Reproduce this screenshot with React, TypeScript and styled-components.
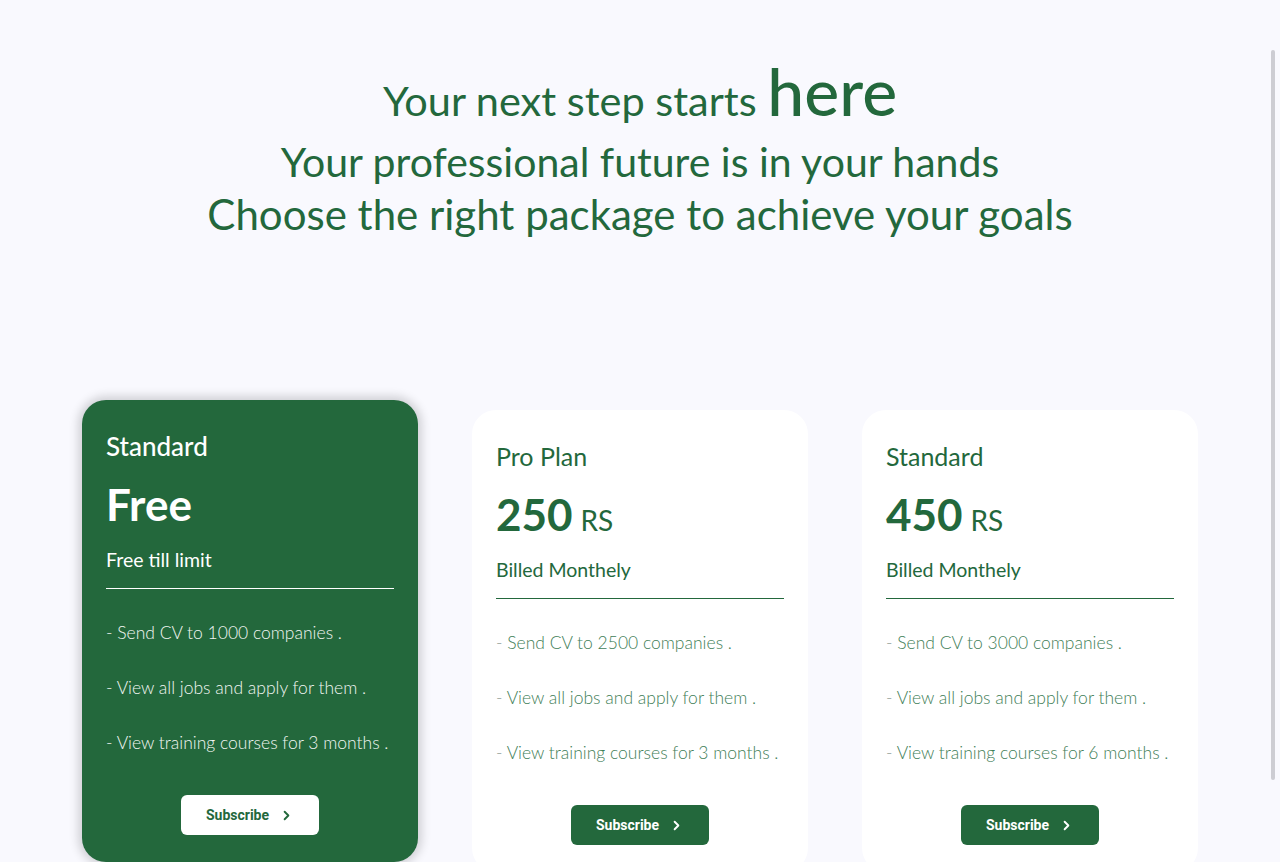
import React from "react";
import styled, { createGlobalStyle } from "styled-components";
import { ChevronRight } from "lucide-react";

const GREEN = "#23683c";

const GlobalStyle = createGlobalStyle`
  html, body {
    margin: 0;
    padding: 0;
    background: #f9f9fe;
    overflow: hidden;
  }
  body {
    font-family: "Lato", "Open Sans", sans-serif;
  }
`;

const Page = styled.main`
  min-height: 862px;
  padding-top: 58px;
  box-sizing: border-box;
`;

const Hero = styled.header`
  display: flex;
  flex-direction: column;
  align-items: center;
  color: ${GREEN};
  text-align: center;
`;

const HeroLine = styled.h1<{ $size: number; $height: number }>`
  margin: 0;
  font-weight: 400;
  font-size: ${({ $size }) => $size}px;
  line-height: ${({ $height }) => $height}px;
`;

const Big = styled.span`
  font-size: 66px;
  font-weight: 500;
  line-height: 1;
`;

const Plans = styled.section`
  display: flex;
  justify-content: center;
  align-items: flex-start;
  gap: 54px;
  margin-top: 170px;
`;

const Card = styled.article<{ $active?: boolean }>`
  width: 336px;
  height: 462px;
  box-sizing: border-box;
  padding: 30px 24px 27px;
  border-radius: 24px;
  display: flex;
  flex-direction: column;
  background: ${({ $active }) => ($active ? GREEN : "#ffffff")};
  color: ${({ $active }) => ($active ? "#ffffff" : GREEN)};
  transform: ${({ $active }) => ($active ? "translateY(-10px)" : "none")};
  box-shadow: ${({ $active }) =>
    $active ? "0 0 10px 4px rgba(0, 0, 0, 0.16)" : "none"};
`;

const PlanName = styled.h2<{ $active?: boolean }>`
  margin: 0;
  font-size: ${({ $active }) => ($active ? 26 : 25)}px;
  line-height: 32px;
  font-weight: ${({ $active }) => ($active ? 500 : 400)};
`;

const Price = styled.div`
  margin-top: 18px;
  height: 48px;
  font-size: 44px;
  line-height: 48px;
  font-weight: 700;
`;

const Currency = styled.span`
  font-size: 28px;
  line-height: 1;
  font-weight: 400;
  margin-left: 8px;
`;

const Billing = styled.p`
  margin: 18px 0 0;
  font-size: 19.5px;
  line-height: 28px;
  font-weight: 400;
`;

const Divider = styled.hr<{ $light?: boolean }>`
  margin: 14px 0 0;
  border: none;
  height: 1px;
  background: ${({ $light }) => ($light ? "#ffffff" : GREEN)};
`;

const Features = styled.ul`
  list-style: none;
  margin: 32px 0 0;
  padding: 0;
  display: flex;
  flex-direction: column;
  gap: 31px;
`;

const Feature = styled.li<{ $light?: boolean }>`
  font-size: 17.5px;
  line-height: 24px;
  font-weight: 300;
  white-space: nowrap;
  color: ${({ $light }) => ($light ? "#f1f6f2" : "#3f8058")};
`;

const Dash = styled.span<{ $light?: boolean }>`
  color: ${({ $light }) => ($light ? "#f1f6f2" : "#8f9c94")};
`;

const Subscribe = styled.button<{ $light?: boolean }>`
  align-self: center;
  margin-top: auto;
  width: 138px;
  height: 40px;
  border: none;
  border-radius: 6px;
  display: flex;
  align-items: center;
  justify-content: center;
  gap: 10px;
  font-family: "Roboto", sans-serif;
  font-weight: 700;
  font-size: 14px;
  cursor: pointer;
  background: ${({ $light }) => ($light ? "#ffffff" : GREEN)};
  color: ${({ $light }) => ($light ? GREEN : "#ffffff")};
`;

const ScrollThumb = styled.div`
  position: fixed;
  right: 5px;
  top: 50px;
  width: 4px;
  height: 730px;
  border-radius: 2px;
  background: #cdcdd3;
`;

type Plan = {
  name: string;
  price: string;
  currency?: string;
  billing: string;
  features: string[];
  active?: boolean;
};

const plans: Plan[] = [
  {
    name: "Standard",
    price: "Free",
    billing: "Free till limit",
    features: [
      "Send CV to 1000 companies .",
      "View all jobs and apply for them .",
      "View training courses for 3 months .",
    ],
    active: true,
  },
  {
    name: "Pro Plan",
    price: "250",
    currency: "RS",
    billing: "Billed Monthely",
    features: [
      "Send CV to 2500 companies .",
      "View all jobs and apply for them .",
      "View training courses for 3 months .",
    ],
  },
  {
    name: "Standard",
    price: "450",
    currency: "RS",
    billing: "Billed Monthely",
    features: [
      "Send CV to 3000 companies .",
      "View all jobs and apply for them .",
      "View training courses for 6 months .",
    ],
  },
];

const PlanCard = ({ plan }: { plan: Plan }) => (
  <Card $active={plan.active}>
    <PlanName $active={plan.active}>{plan.name}</PlanName>
    <Price>
      {plan.price}
      {plan.currency && <Currency>{plan.currency}</Currency>}
    </Price>
    <Billing>{plan.billing}</Billing>
    <Divider $light={plan.active} />
    <Features>
      {plan.features.map((f) => (
        <Feature key={f} $light={plan.active}>
          <Dash $light={plan.active}>- </Dash>
          {f}
        </Feature>
      ))}
    </Features>
    <Subscribe $light={plan.active}>
      Subscribe
      <ChevronRight size={15} strokeWidth={3} />
    </Subscribe>
  </Card>
);

export default function App() {
  return (
    <>
      <GlobalStyle />
      <Page>
        <Hero>
          <HeroLine $size={41.5} $height={72}>
            Your next step starts <Big>here</Big>
          </HeroLine>
          <HeroLine $size={41} $height={52}>
            Your professional future is in your hands
          </HeroLine>
          <HeroLine $size={42} $height={52}>
            Choose the right package to achieve your goals
          </HeroLine>
        </Hero>
        <Plans>
          {plans.map((p, i) => (
            <PlanCard key={i} plan={p} />
          ))}
        </Plans>
      </Page>
      <ScrollThumb />
    </>
  );
}
